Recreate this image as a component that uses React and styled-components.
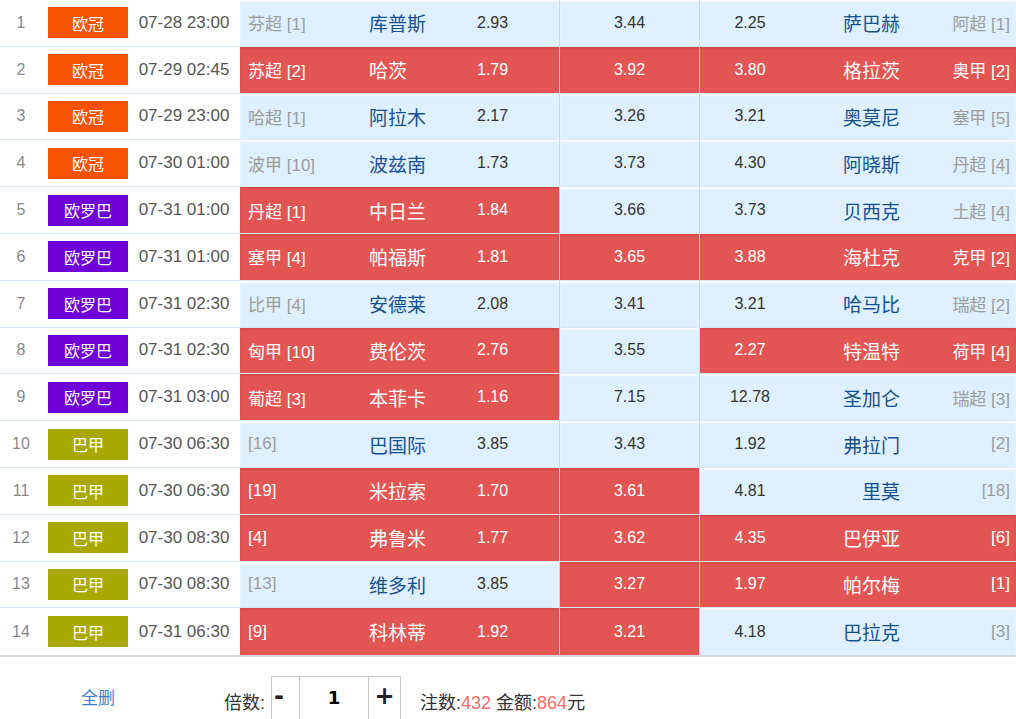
import React from 'react';
import styled, { createGlobalStyle, css } from 'styled-components';

const GlobalStyle = createGlobalStyle`
  html, body {
    margin: 0;
    padding: 0;
    background: #ffffff;
    font-family: "Liberation Sans", "Noto Sans CJK SC", sans-serif;
    overflow: hidden;
  }
`;

const LEAGUES = {
  欧冠: '#f65200',
  欧罗巴: '#7000d8',
  巴甲: '#a8a800',
};

// sel: [home, draw, away], 1 = selected (red cell)
const matches = [
  { no: 1, lg: '欧冠', time: '07-28 23:00', hl: '芬超 [1]', home: '库普斯', h: '2.93', d: '3.44', a: '2.25', away: '萨巴赫', al: '阿超 [1]', sel: [0, 0, 0] },
  { no: 2, lg: '欧冠', time: '07-29 02:45', hl: '苏超 [2]', home: '哈茨', h: '1.79', d: '3.92', a: '3.80', away: '格拉茨', al: '奥甲 [2]', sel: [1, 1, 1] },
  { no: 3, lg: '欧冠', time: '07-29 23:00', hl: '哈超 [1]', home: '阿拉木', h: '2.17', d: '3.26', a: '3.21', away: '奥莫尼', al: '塞甲 [5]', sel: [0, 0, 0] },
  { no: 4, lg: '欧冠', time: '07-30 01:00', hl: '波甲 [10]', home: '波兹南', h: '1.73', d: '3.73', a: '4.30', away: '阿晓斯', al: '丹超 [4]', sel: [0, 0, 0] },
  { no: 5, lg: '欧罗巴', time: '07-31 01:00', hl: '丹超 [1]', home: '中日兰', h: '1.84', d: '3.66', a: '3.73', away: '贝西克', al: '土超 [4]', sel: [1, 0, 0] },
  { no: 6, lg: '欧罗巴', time: '07-31 01:00', hl: '塞甲 [4]', home: '帕福斯', h: '1.81', d: '3.65', a: '3.88', away: '海杜克', al: '克甲 [2]', sel: [1, 1, 1] },
  { no: 7, lg: '欧罗巴', time: '07-31 02:30', hl: '比甲 [4]', home: '安德莱', h: '2.08', d: '3.41', a: '3.21', away: '哈马比', al: '瑞超 [2]', sel: [0, 0, 0] },
  { no: 8, lg: '欧罗巴', time: '07-31 02:30', hl: '匈甲 [10]', home: '费伦茨', h: '2.76', d: '3.55', a: '2.27', away: '特温特', al: '荷甲 [4]', sel: [1, 0, 1] },
  { no: 9, lg: '欧罗巴', time: '07-31 03:00', hl: '葡超 [3]', home: '本菲卡', h: '1.16', d: '7.15', a: '12.78', away: '圣加仑', al: '瑞超 [3]', sel: [1, 0, 0] },
  { no: 10, lg: '巴甲', time: '07-30 06:30', hl: '[16]', home: '巴国际', h: '3.85', d: '3.43', a: '1.92', away: '弗拉门', al: '[2]', sel: [0, 0, 0] },
  { no: 11, lg: '巴甲', time: '07-30 06:30', hl: '[19]', home: '米拉索', h: '1.70', d: '3.61', a: '4.81', away: '里莫', al: '[18]', sel: [1, 1, 0] },
  { no: 12, lg: '巴甲', time: '07-30 08:30', hl: '[4]', home: '弗鲁米', h: '1.77', d: '3.62', a: '4.35', away: '巴伊亚', al: '[6]', sel: [1, 1, 1] },
  { no: 13, lg: '巴甲', time: '07-30 08:30', hl: '[13]', home: '维多利', h: '3.85', d: '3.27', a: '1.97', away: '帕尔梅', al: '[1]', sel: [0, 1, 1] },
  { no: 14, lg: '巴甲', time: '07-31 06:30', hl: '[9]', home: '科林蒂', h: '1.92', d: '3.21', a: '4.18', away: '巴拉克', al: '[3]', sel: [1, 1, 0] },
];

const Page = styled.div`
  width: 1016px;
`;

const Table = styled.div`
  border-bottom: 2px solid #d3d6da;
`;

const Row = styled.div`
  display: grid;
  grid-template-columns: 42px 86px 112px 320px 140px 1fr;
  height: 46.8px;
  box-sizing: border-box;
  border-bottom: 1px solid #dbe8f6;
  &:last-child {
    border-bottom: none;
  }
`;

const Plain = styled.div`
  display: flex;
  align-items: center;
  justify-content: ${(p) => p.$justify || 'center'};
  font-size: ${(p) => p.$size || 16}px;
  color: ${(p) => p.$color || '#888'};
  background: #ffffff;
`;

const Badge = styled.div`
  width: 80px;
  height: 31px;
  display: flex;
  align-items: center;
  justify-content: center;
  background: ${(p) => p.$bg};
  color: #ffffff;
  font-size: 16px;
`;

const OddsCell = styled.div`
  display: grid;
  align-items: center;
  cursor: pointer;
  ${(p) =>
    p.$on
      ? css`
          background: #e35553;
          color: #ffffff;
          box-shadow: inset 0 2px 2px rgba(150, 30, 30, 0.18);
        `
      : css`
          background: #def0fd;
          color: #333333;
          box-shadow: inset 0 2px 2px rgba(255, 255, 255, 0.75);
        `}
  border-right: ${(p) => (p.$last ? 'none' : '1px solid #c3d8ee')};
`;

const HomeCell = styled(OddsCell)`
  grid-template-columns: 121px 108px 1fr;
  padding-left: 8px;
`;

const DrawCell = styled(OddsCell)`
  justify-items: center;
`;

const AwayCell = styled(OddsCell)`
  grid-template-columns: 100px 100px 1fr;
  padding-right: 6px;
`;

const LeagueText = styled.span`
  font-size: 17px;
  color: ${(p) => (p.$on ? '#ffffff' : '#9c9c9c')};
  text-align: ${(p) => p.$align || 'left'};
  white-space: nowrap;
`;

const TeamName = styled.span`
  font-size: 19px;
  color: ${(p) => (p.$on ? '#ffffff' : '#17508f')};
  text-align: ${(p) => p.$align || 'left'};
  white-space: nowrap;
`;

const Odd = styled.span`
  font-size: 16px;
  text-align: ${(p) => p.$align || 'left'};
`;

const Footer = styled.div`
  display: flex;
  align-items: center;
  padding-top: 19px;
  font-size: 18px;
  color: #333;
`;

const DeleteAll = styled.a`
  width: 196px;
  text-align: center;
  color: #3a7fd5;
  font-size: 17px;
  cursor: pointer;
  margin-top: -6px;
`;

const Label = styled.span`
  margin-left: 28px;
  margin-right: 6px;
  margin-top: 4px;
`;

const Stepper = styled.div`
  display: flex;
  height: 46px;
  border: 1px solid #c8c8c8;
  box-sizing: border-box;
`;

const StepBtn = styled.button`
  width: ${(p) => p.$w}px;
  border: none;
  border-right: ${(p) => (p.$divider ? '1px solid #c8c8c8' : 'none')};
  background: #ffffff;
  font-family: "DejaVu Sans", sans-serif;
  font-size: 24px;
  font-weight: bold;
  color: #222;
  padding: 0 0 6px ${(p) => p.$pl || 0}px;
  text-align: ${(p) => p.$align || 'center'};
  cursor: pointer;
`;

const Value = styled.div`
  width: 68px;
  border-right: 1px solid #c8c8c8;
  display: flex;
  align-items: center;
  justify-content: center;
  padding-bottom: 4px;
  font-family: "DejaVu Sans", sans-serif;
  font-weight: bold;
  font-size: 18px;
  color: #000;
`;

const Summary = styled.span`
  margin-left: 19px;
  margin-top: 4px;
`;

const Red = styled.span`
  color: #f26a64;
`;

export default function App() {
  return (
    <Page>
      <GlobalStyle />
      <Table>
        {matches.map((m) => {
          const [h, d, a] = m.sel.map(Boolean);
          return (
            <Row key={m.no}>
              <Plain $color="#888">{m.no}</Plain>
              <Plain $justify="flex-end">
                <Badge $bg={LEAGUES[m.lg]}>{m.lg}</Badge>
              </Plain>
              <Plain $size={17} $color="#555">{m.time}</Plain>
              <HomeCell $on={h}>
                <LeagueText $on={h}>{m.hl}</LeagueText>
                <TeamName $on={h}>{m.home}</TeamName>
                <Odd>{m.h}</Odd>
              </HomeCell>
              <DrawCell $on={d}>
                <Odd>{m.d}</Odd>
              </DrawCell>
              <AwayCell $on={a} $last>
                <Odd $align="center">{m.a}</Odd>
                <TeamName $on={a} $align="right">{m.away}</TeamName>
                <LeagueText $on={a} $align="right">{m.al}</LeagueText>
              </AwayCell>
            </Row>
          );
        })}
      </Table>
      <Footer>
        <DeleteAll>全删</DeleteAll>
        <Label>倍数:</Label>
        <Stepper>
          <StepBtn $w={28} $divider $align="left" $pl={2}>-</StepBtn>
          <Value>1</Value>
          <StepBtn $w={31}>+</StepBtn>
        </Stepper>
        <Summary>
          注数:<Red>432</Red> 金额:<Red>864</Red>元
        </Summary>
      </Footer>
    </Page>
  );
}
